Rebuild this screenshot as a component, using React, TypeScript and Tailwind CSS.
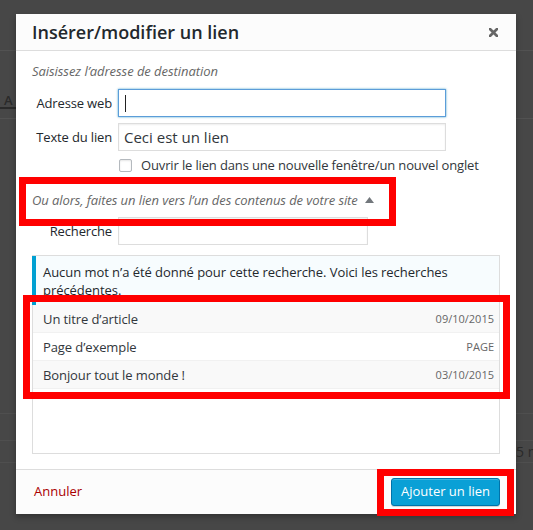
// base
import { FC } from "react";

interface IResultRowProps {
  title: string;
  info: string;
  striped?: boolean;
}

const ResultRow: FC<IResultRowProps> = ({ title, info, striped }) => (
  <li
    className={`h-[28px] flex items-center justify-between pl-[10px] pr-[5px] border-b border-[#f1f1f1] ${
      striped ? "bg-[#f9f9f9]" : "bg-white"
    }`}
  >
    <span className="text-[13px] tracking-[-0.1px] text-[#32373c]">{title}</span>
    <span className="text-[11px] text-[#666]">{info}</span>
  </li>
);

const FieldRow: FC<{ label: string; children: React.ReactNode }> = ({
  label,
  children,
}) => (
  <div className="flex items-center gap-[6px]">
    <span className="w-[80px] text-right text-[13px] tracking-[-0.15px] text-[#23282d]">
      {label}
    </span>
    {children}
  </div>
);

const App = () => {
  const results = [
    { title: "Un titre d’article", info: "09/10/2015" },
    { title: "Page d’exemple", info: "PAGE" },
    { title: "Bonjour tout le monde !", info: "03/10/2015" },
  ];

  return (
    <div className="relative w-[533px] h-[530px] overflow-hidden bg-[#474747] font-['Open_Sans',sans-serif]">
      {/* page behind the overlay */}
      <div className="flex flex-col">
        <div className="h-[51px] border-b border-[#525252]" />
        <div className="h-[68px] border-b border-[#525252] flex items-end pb-[9px]">
          <span className="w-[16px] pl-[4px] text-[13px] leading-[14px] font-semibold text-[#2a2a2a] border-b-2 border-[#2a2a2a]">
            A
          </span>
        </div>
        <div className="h-[295px] border-b border-[#4f4f4f]" />
        <div className="h-[27px] border-b border-[#4f4f4f]" />
        <div className="h-[22px] border-b border-[#4f4f4f] flex items-center pl-[516px] whitespace-nowrap text-[14px] text-[#2a2a2a]">
          5 m
        </div>
      </div>

      {/* modal */}
      <div className="absolute left-[16px] top-[14px] w-[500px] h-[500px] bg-white shadow-[0_3px_6px_rgba(0,0,0,0.3)] flex flex-col">
        <div className="h-[37px] shrink-0 bg-[#fcfcfc] border-b border-[#dddddd] flex items-center justify-between pl-[16px] pr-[18px]">
          <h1 className="text-[18px] font-semibold leading-[36px] text-[#23282d]">
            Insérer/modifier un lien
          </h1>
          <svg width="9" height="9" viewBox="0 0 9 9">
            <path
              d="M1 1 L8 8 M8 1 L1 8"
              stroke="#666"
              strokeWidth="2.7"
              strokeLinecap="square"
            />
          </svg>
        </div>

        <div className="flex-1 flex flex-col px-[16px] leading-[18px]">
          <p className="mt-[11px] text-[13px] italic tracking-[-0.05px] text-[#666]">
            Saisissez l’adresse de destination
          </p>

          <div className="mt-[9px]">
            <FieldRow label="Adresse web">
              <div className="w-[328px] h-[28px] flex items-center pl-[6px] border border-[#5b9dd9] shadow-[0_0_2px_rgba(30,140,190,0.8)]">
                <span className="w-px h-[17px] bg-[#222]" />
              </div>
            </FieldRow>
          </div>

          <div className="mt-[6px]">
            <FieldRow label="Texte du lien">
              <div className="w-[328px] h-[28px] flex items-center pl-[5px] border border-[#dddddd] shadow-[inset_0_1px_2px_rgba(0,0,0,0.07)] text-[15px] text-[#32373c]">
                Ceci est un lien
              </div>
            </FieldRow>
          </div>

          <label className="mt-[5px] ml-[87px] flex items-center gap-[9px] text-[13px] tracking-[-0.14px] text-[#32373c]">
            <span className="w-[13px] h-[13px] rounded-[2px] border border-[#b4b9be] bg-white shadow-[inset_0_1px_2px_rgba(0,0,0,0.1)]" />
            Ouvrir le lien dans une nouvelle fenêtre/un nouvel onglet
          </label>

          <p className="mt-[17px] flex items-center gap-[7px] text-[13px] italic tracking-[-0.08px] text-[#666]">
            Ou alors, faites un lien vers l’un des contenus de votre site
            <svg width="9" height="6" viewBox="0 0 9 6">
              <polygon points="0,6 4.5,0 9,6" fill="#72777c" />
            </svg>
          </p>

          <div className="mt-[8px]">
            <FieldRow label="Recherche">
              <div className="w-[250px] h-[28px] border border-[#dddddd] shadow-[inset_0_1px_2px_rgba(0,0,0,0.07)]" />
            </FieldRow>
          </div>

          <div className="mt-[10px] w-[468px] h-[199px] border border-[#dddddd] flex flex-col">
            <div className="-ml-px border-l-4 border-[#00a0d2] bg-[#f7fcfe] pl-[7px] pr-[10px] pt-[7px] pb-[6px] text-[13px] tracking-[-0.05px] text-[#23282d]">
              Aucun mot n’a été donné pour cette recherche. Voici les
              recherches précédentes.
            </div>
            <ul className="flex flex-col">
              {results.map((r, i) => (
                <ResultRow
                  key={r.title}
                  title={r.title}
                  info={r.info}
                  striped={i % 2 === 0}
                />
              ))}
            </ul>
          </div>
        </div>

        <div className="h-[45px] shrink-0 bg-[#fcfcfc] border-t border-[#dddddd] flex items-center justify-between pl-[18px] pr-[16px]">
          <span className="text-[13px] text-[#a00]">Annuler</span>
          <button className="w-[109px] h-[28px] rounded-[3px] bg-[#0aa0d6] border border-[#0073aa] shadow-[inset_0_1px_0_rgba(120,200,230,0.5),0_1px_0_rgba(0,0,0,0.15)] text-[13px] text-white">
            Ajouter un lien
          </button>
        </div>
      </div>

      {/* annotations */}
      <div className="absolute left-[19px] top-[177px] w-[377px] h-[49px] border-[7px] border-[#ff0000]" />
      <div className="absolute left-[23px] top-[295px] w-[487px] h-[104px] border-[7px] border-[#ff0000]" />
      <div className="absolute left-[377px] top-[469px] w-[137px] h-[47px] border-[7px] border-[#ff0000]" />
    </div>
  );
};

export default App;
